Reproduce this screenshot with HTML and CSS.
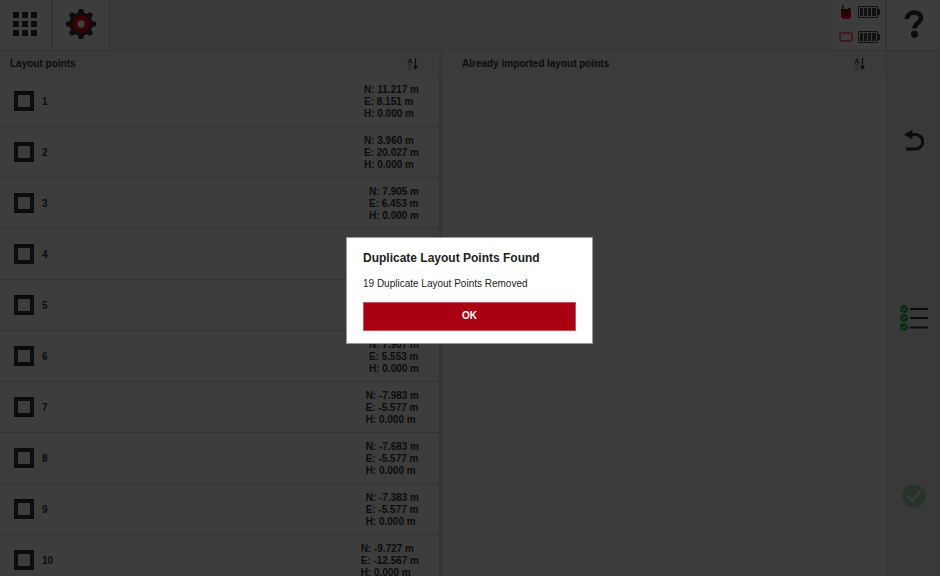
FILE: index.html
```html
<!DOCTYPE html>
<html lang="en">
<head>
<meta charset="utf-8">
<title>Layout points</title>
<link rel="stylesheet" href="styles.css">
</head>
<body>
<div class="app">
  <header class="topbar">
    <button class="tile apps" aria-label="Menu">
      <svg width="24" height="24" viewBox="0 0 24 24" fill="#0c0c0c"><path d="M0 0h6v6H0zM9 0h6v6H9zM18 0h6v6h-6zM0 9h6v6H0zM9 9h6v6H9zM18 9h6v6h-6zM0 18h6v6H0zM9 18h6v6H9zM18 18h6v6h-6z"/></svg>
    </button>
    <button class="tile settings" aria-label="Settings">
      <svg width="32" height="32" viewBox="-16 -16 32 32">
        <g fill="#0c0c0c"><circle r="11.5"/>
          <path id="teeth" d="M-3.5 -10L-2 -15H2L3.5 -10V10L2 15H-2L-3.5 10Z"/>
          <use href="#teeth" transform="rotate(45)"/><use href="#teeth" transform="rotate(90)"/><use href="#teeth" transform="rotate(135)"/></g>
        <circle r="6.2" fill="none" stroke="#3b0006" stroke-width="5"/><circle r="3.7" fill="#3f3f3f"/>
      </svg>
    </button>
    <div class="spacer"></div>
    <div class="status">
      <svg width="14" height="16" viewBox="0 0 14 16"><path d="M2 5H12V13L10 15H4L2 13Z" fill="#3b0006"/><path d="M3 1H4.500V5H9V4H11V8H9V12H5V8H3Z" fill="#100c0d"/><path d="M5 7H8M6 10H9" stroke="#3b0006"/></svg>
      <svg width="22" height="12" viewBox="0 0 22 12"><path d="M.5 .5H19.500V11.500H.5Z" fill="#3b3b3b" stroke="#111"/><path d="M2 2H5V10H2ZM6 2H9V10H6ZM10 2H13V10H10ZM14 2H18V10H14ZM20 3H22V9H20Z" fill="#111"/></svg>
      <svg width="14" height="10" viewBox="0 0 14 10"><rect x="1" y="1" width="12" height="8" rx="1" fill="#3d3b3b" stroke="#3a1519" stroke-width="1.500"/></svg>
      <svg width="22" height="12" viewBox="0 0 22 12"><path d="M.5 .5H19.500V11.500H.5Z" fill="#3b3b3b" stroke="#111"/><path d="M2 2H5V10H2ZM6 2H9V10H6ZM10 2H13V10H10ZM14 2H18V10H14ZM20 3H22V9H20Z" fill="#111"/></svg>
    </div>
    <button class="tile help" aria-label="Help">
      <svg width="20" height="28" viewBox="0 0 20 28"><path d="M3 9C3 0.500 17 0.500 17 8C17 12.500 10.500 13 10.500 18.500" fill="none" stroke="#0c0c0c" stroke-width="4.500"/><circle cx="10.500" cy="24.200" r="3.500" fill="#0c0c0c"/></svg>
    </button>
  </header>
  <main class="content">
    <section class="panel left">
      <div class="panel-head"><h2>Layout points</h2>
        <button class="sort" aria-label="Sort"><svg width="12" height="12" viewBox="0 0 12 12" fill="none"><path d="M1 5.500L3 .5L5 5.500M1.500 4H4.500" stroke="#111"/><path d="M1 7H4.500L1 11H5" stroke="#262626"/><path d="M8.500 0V9" stroke="#0c0c0c" stroke-width="1.200"/><path d="M6 8H11L8.500 12Z" fill="#0c0c0c"/></svg></button>
      </div>
      <ul class="points">
        <li><label><input type="checkbox"><span>1</span></label><p>N: 11.217 m<br>E: 8.151 m<br>H: 0.000 m</p></li>
        <li><label><input type="checkbox"><span>2</span></label><p>N: 3.960 m<br>E: 20.027 m<br>H: 0.000 m</p></li>
        <li><label><input type="checkbox"><span>3</span></label><p>N: 7.905 m<br>E: 6.453 m<br>H: 0.000 m</p></li>
        <li><label><input type="checkbox"><span>4</span></label></li>
        <li><label><input type="checkbox"><span>5</span></label></li>
        <li><label><input type="checkbox"><span>6</span></label><p>N: 7.907 m<br>E: 5.553 m<br>H: 0.000 m</p></li>
        <li><label><input type="checkbox"><span>7</span></label><p>N: -7.983 m<br>E: -5.577 m<br>H: 0.000 m</p></li>
        <li><label><input type="checkbox"><span>8</span></label><p>N: -7.683 m<br>E: -5.577 m<br>H: 0.000 m</p></li>
        <li><label><input type="checkbox"><span>9</span></label><p>N: -7.383 m<br>E: -5.577 m<br>H: 0.000 m</p></li>
        <li><label><input type="checkbox"><span>10</span></label><p>N: -9.727 m<br>E: -12.567 m<br>H: 0.000 m</p></li>
      </ul>
    </section>
    <section class="panel right">
      <div class="panel-head"><h2>Already imported layout points</h2>
        <button class="sort" aria-label="Sort"><svg width="12" height="12" viewBox="0 0 12 12" fill="none"><path d="M1 5.500L3 .5L5 5.500M1.500 4H4.500" stroke="#111"/><path d="M1 7H4.500L1 11H5" stroke="#262626"/><path d="M8.500 0V9" stroke="#0c0c0c" stroke-width="1.200"/><path d="M6 8H11L8.500 12Z" fill="#0c0c0c"/></svg></button>
      </div>
    </section>
    <nav class="side">
      <button aria-label="Back"><svg width="20" height="22" viewBox="0 0 20 22"><path d="M7 5.500H11.500A6.700 6.700 0 0 1 11.500 20H2" fill="none" stroke="#0c0c0c" stroke-width="3"/><path d="M0 5.500L8.500 .5V10.500Z" fill="#0c0c0c"/></svg></button>
      <button aria-label="Select all"><svg width="28" height="26" viewBox="0 0 28 26"><g fill="#092c14"><circle cx="4" cy="4" r="4"/><circle cx="4" cy="13" r="4"/><circle cx="4" cy="22" r="4"/></g><path d="M2 4L3.500 5.500L6 2.500M2 13L3.500 14.500L6 11.500M2 22L3.500 23.500L6 20.500" fill="none" stroke="#384038"/><path d="M10 4H28M10 13H28M10 22.500H28" stroke="#0c0c0c" stroke-width="2"/></svg></button>
      <button aria-label="Confirm" disabled><svg width="24" height="24" viewBox="0 0 24 24"><circle cx="12" cy="12" r="11.500" fill="#28332c"/><path d="M5.500 12L10.500 17L18 7" fill="none" stroke="#3a3d39" stroke-width="2.500"/></svg></button>
    </nav>
  </main>
  <div class="overlay">
    <div class="dialog" role="dialog" aria-modal="true" aria-labelledby="dialog-title">
      <h1 id="dialog-title">Duplicate Layout Points Found</h1>
      <p>19 Duplicate Layout Points Removed</p>
      <button>OK</button>
    </div>
  </div>
</div>
</body>
</html>
```
FILE: styles.css
```css
* { box-sizing: border-box; }
body { margin: 0; background: #3d3d3d; color: #0c0c0c; font: 700 10px/12px "Liberation Sans", Arial, sans-serif; }
h1, h2, p, ul { margin: 0; padding: 0; }
button { margin: 0; padding: 0; border: 0; background: none; font: inherit; color: inherit; }
svg { display: block; }

.app { position: relative; display: flex; flex-direction: column; height: 100vh; overflow: hidden; }

.topbar { display: flex; flex: none; height: 51px; background: #393937; border-bottom: 1px solid #343434; }
.tile { display: flex; align-items: center; justify-content: center; background: #3d3d3d; }
.apps { width: 53px; padding: 0 4px 2px 2px; border-right: 2px solid #353535; }
.settings { width: 55px; padding-bottom: 2px; }
.spacer { flex: 1; }
.status { display: grid; grid-template-columns: 14px 22px; grid-template-rows: 25px 25px; gap: 0 5px; align-items: center; justify-content: center; width: 53px; padding: 0 0 2px 1px; background: #3d3d3d; margin-top: 0; }
.status svg { margin-bottom: 2px; }
.help { width: 55px; padding-bottom: 2px; border-left: 2px solid #353535; }

.content { display: grid; grid-template-columns: 442fr 444fr 54px; flex: 1; min-height: 0; }
.panel { min-width: 0; overflow: hidden; background: #3d3d3d; }
.left { border-right: 3px solid #363636; }
.panel-head { display: flex; align-items: center; justify-content: space-between; height: 25px; padding: 0 20px 0 10px; background: #3b3b3b; }
.right .panel-head { padding-left: 20px; }
.panel-head h2 { font-size: 10px; line-height: 12px; }

.points { list-style: none; }
.points li { display: flex; align-items: center; justify-content: space-between; height: 51px; padding: 0 20px 0 14px; border-bottom: 1px solid #343434; }
.points label { display: flex; align-items: center; gap: 8px; }
.points span, .points p { padding-top: 2px; }
.points input { appearance: none; width: 20px; height: 20px; margin: 0; border: 4px solid #0b0b0b; background: #3d3d3d; }

.side { display: grid; grid-template-rows: repeat(3, 178px); overflow: hidden; background: #393937; border-left: 1px solid #363634; }
.side button { display: flex; align-items: center; justify-content: center; border-bottom: 1px solid #373735; }

.overlay { position: absolute; inset: 0; display: flex; align-items: center; justify-content: center; padding: 4px 1px 0 0; }
.dialog { width: 247px; padding: 12px 16px; background: #fff; border: 1px solid #999; color: #222; }
.dialog h1 { font-size: 12px; line-height: 16px; }
.dialog p { margin-top: 12px; font-weight: 400; }
.dialog button { display: block; width: 100%; height: 29px; margin-top: 12px; background: #a90011; border: 1px solid #c95261; color: #fff; }
```
